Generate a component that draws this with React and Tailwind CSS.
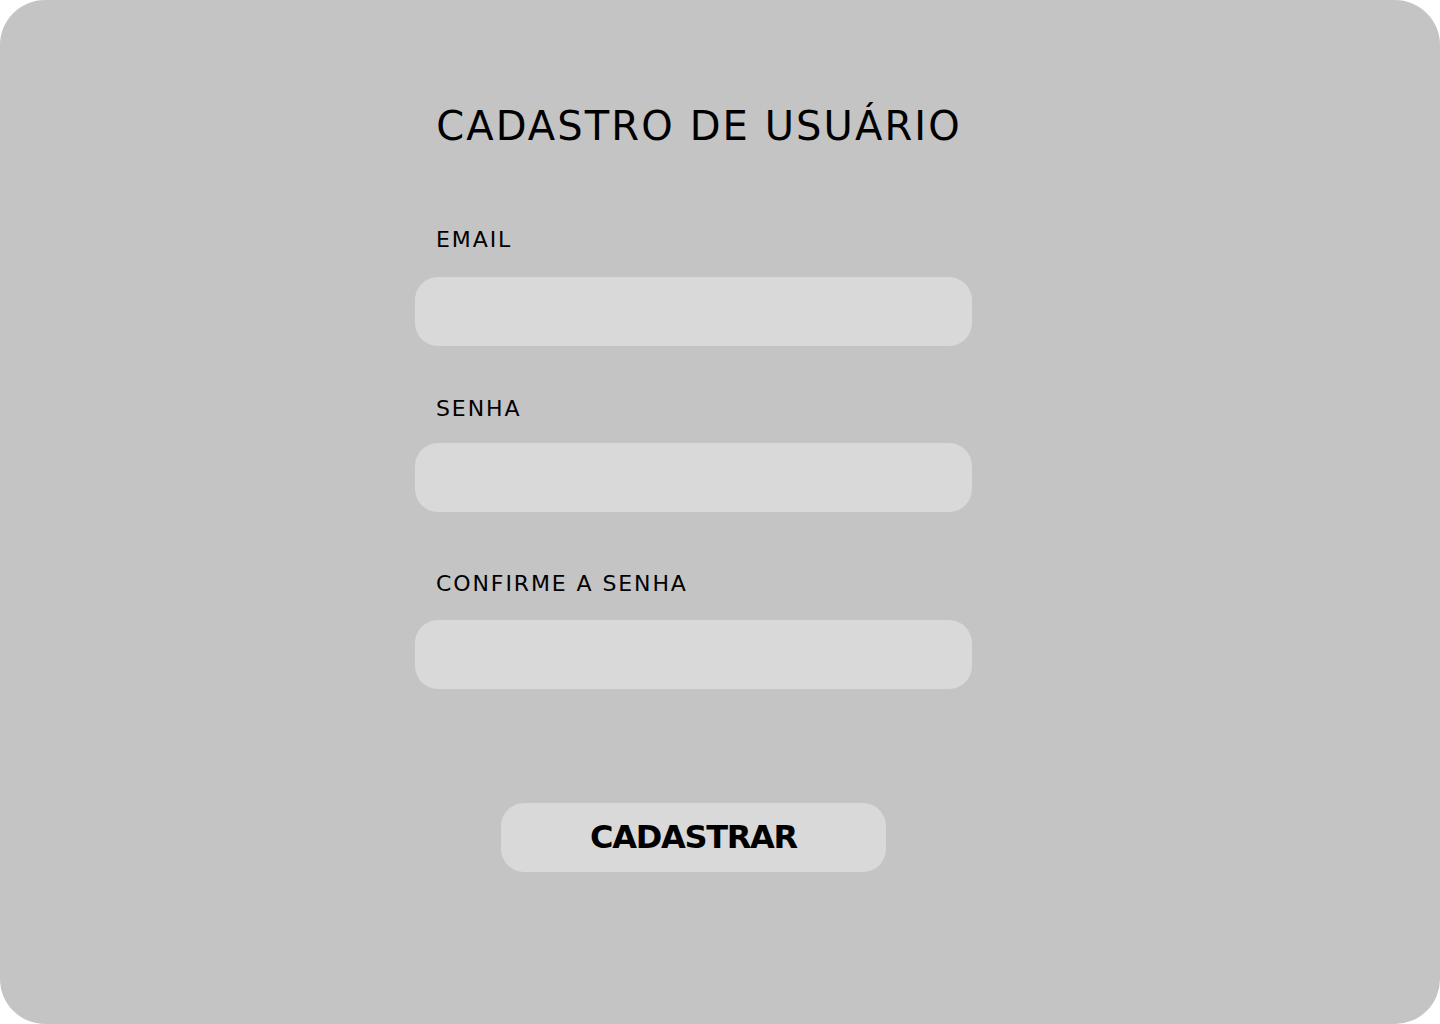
export default function App() {
  const font = { fontFamily: '"DejaVu Sans", "Noto Sans", sans-serif' };
  return (
    <div className="w-[1440px] h-[1024px] bg-white" style={font}>
      <div className="w-full h-full rounded-[45px] bg-[#c4c4c4] pl-[415px] pt-[100px]">
        <div className="w-[557px] flex flex-col">
          <h1 className="pl-[11px] pt-[2px] text-center text-[40px] leading-[48px] text-black font-normal tracking-[2.1px]">
            CADASTRO DE USUÁRIO
          </h1>
          <label className="mt-[77px] pl-[21px] text-[22px] leading-[26px] text-black tracking-[1.9px]">EMAIL</label>
          <div className="mt-[24px] h-[69px] rounded-[23px] bg-[#d9d9d9]" />
          <label className="mt-[50px] pl-[21px] text-[22px] leading-[26px] text-black tracking-[1.9px]">SENHA</label>
          <div className="mt-[21px] h-[69px] rounded-[23px] bg-[#d9d9d9]" />
          <label className="mt-[59px] pl-[21px] text-[22px] leading-[26px] text-black tracking-[1.9px]">CONFIRME A SENHA</label>
          <div className="mt-[23px] h-[69px] rounded-[23px] bg-[#d9d9d9]" />
          <button className="mt-[114px] ml-[86px] w-[385px] h-[69px] rounded-[23px] bg-[#d9d9d9] text-black text-[32px] font-bold tracking-[-1.3px] leading-[69px]">
            CADASTRAR
          </button>
        </div>
      </div>
    </div>
  );
}
